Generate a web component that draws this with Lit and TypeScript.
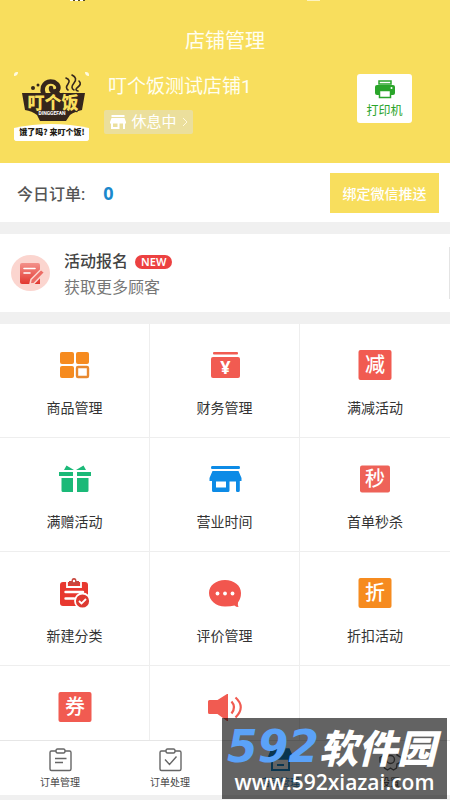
import { LitElement, html, svg, css, TemplateResult } from "lit";
import { customElement } from "lit/decorators.js";

const red = "#f15b51";

const tile = (ch: string, color: string, w: number, h: number) => svg`
  <rect x=${20 - w / 2} y=${20 - h / 2} width=${w} height=${h} rx="2" fill=${color}/>
  <text x="20" y="27" text-anchor="middle" class="glyph">${ch}</text>`;

const icons: Record<string, TemplateResult<2>> = {
  goods: svg`<g fill="#f68b1f"><rect x="5" y="7" width="14" height="12" rx="2"/>
    <rect x="21" y="7" width="13" height="12" rx="2"/><rect x="5" y="21" width="14" height="12" rx="2"/></g>
    <rect x="22" y="22" width="11" height="10" rx="1" fill="none" stroke="#e8892f" stroke-width="2.4"/>`,
  money: svg`<rect x="8" y="7" width="25" height="2.6" rx="1" fill=${red}/>
    <rect x="6" y="12" width="29" height="21" rx="2" fill=${red}/>
    <text x="20.500" y="29" text-anchor="middle" class="yen">¥</text>`,
  reduce: tile("减", red, 33, 30),
  gift: svg`<g fill="#1bb978"><path d="M4 13H18V17H4zM22 13H36V17H22zM6.500 19H18V33H8Q6.500 33 6.500 31.500zM22 19H33.500V31.500Q33.500 33 32 33H22z"/>
    <path d="M9 11L11.500 6.500L19 11zM31 11L28.500 6.500L21 11z"/></g>`,
  shop: svg`<path fill="#0d8be6" fill-rule="evenodd" d="M7 7H34Q35 7 35 8.500T34 10H7Q6 10 6 8.500T7 7zM7.500 12H33.500L36.500 19V22H34.800V31.500Q34.800 33 33.300 33H32.200Q31 33 31 31.500V22.500H24.500V31.500Q24.500 33 23 33H8.500Q7 33 7 31.500V22H4.500V19zM11 22.500V28.500H21V22.500z"/>`,
  flash: tile("秒", "#ee6258", 30, 27),
  category: svg`<rect x="5" y="9" width="28" height="24" rx="3" fill="#e8382f"/>
    <path d="M12 8V14H26V8" fill="none" stroke="#fff" stroke-width="1.800"/>
    <path d="M14 12V8H16.500Q16.500 5 19 5T21.500 8H24V12z" fill="#c8453c"/><circle cx="19" cy="8" r="1.200" fill="#fff"/>
    <path d="M10.500 19H28M10.500 25.500H19" stroke="#fff" stroke-width="2.400" stroke-linecap="round"/>
    <circle cx="27.500" cy="28" r="7.500" fill="#dd3a31" stroke="#fff" stroke-width="1.800"/>
    <path d="M24 28L26.500 30.500L31 26" fill="none" stroke="#fff" stroke-width="1.800"/>`,
  review: svg`<path d="M20 7C11 7 4 12.500 4 20S11 33.500 20 33.500Q26 33.500 29.500 32.500Q31 34 33.500 34Q32.500 32 33 29.500Q36 25.500 36 20C36 12.500 29 7 20 7z" fill="#f2564e"/>
    <g fill="#fff"><circle cx="12.500" cy="20.500" r="1.900"/><circle cx="20" cy="20.500" r="1.900"/><circle cx="27.500" cy="20.500" r="1.900"/></g>`,
  discount: tile("折", "#f68b1f", 33, 30),
  coupon: tile("券", red, 33, 30),
  speaker: svg`<path d="M4.500 13H12.500L22 7H23V34H22L12.500 27H4.500Q3 27 3 25.500V14.500Q3 13 4.500 13z" fill=${red}/>
    <path d="M26.500 14.500Q31.500 20 26.500 26.500M30.500 10.500Q41 20 30.500 30.500" fill="none" stroke=${red} stroke-width="2.200"/>`,
};

const entries: [string, string][] = [
  ["goods", "商品管理"], ["money", "财务管理"], ["reduce", "满减活动"],
  ["gift", "满赠活动"], ["shop", "营业时间"], ["flash", "首单秒杀"],
  ["category", "新建分类"], ["review", "评价管理"], ["discount", "折扣活动"],
  ["coupon", ""], ["speaker", ""],
];

const board = svg`<path d="M8 4H3.500Q2 4 2 5.500V22Q2 23.500 3.500 23.500H21.500Q23 23.500 23 22V5.500Q23 4 21.500 4H17M9.500 2H15.500Q17 2 17 4T15.500 6H9.500Q8 6 8 4T9.500 2z"/>`;

const tabs: [string, TemplateResult<2>][] = [
  ["订单管理", svg`${board}<path d="M7 11.500H18.500M7 15.500H15"/>`],
  ["订单处理", svg`${board}<path d="M7 12.500L11.500 17.500L18.500 9.500"/>`],
  ["店铺管理", svg`<path class="solid" d="M4 2H21L24 9V12H1V9z"/><path stroke-width="2" d="M4 12V23H21V12M9 18H16"/>`],
  ["设置", svg`<path d="M9.500 2L12.500 4L15.500 2L19 4L19 8L23 10.500V15L19 17L18.500 21L15.500 23L12.500 21L9.500 23L6.500 21L6 17L2 15V10.500L6 8V4z"/><circle cx="12.500" cy="12.500" r="4"/>`],
];

@customElement("app-root")
export class AppRoot extends LitElement {
  static styles = css`
    :host {
      display: flex; flex-direction: column; height: 100vh; position: relative;
      overflow: hidden; background: #f0f0f0; color: #333;
      font-family: Roboto, "Noto Sans CJK SC", sans-serif;
    }
    * { box-sizing: border-box; }
    svg { display: block; flex: none; }
    button { font-family: inherit; border: 0; margin: 0; padding: 0; cursor: pointer; }
    a { color: inherit; text-decoration: none; }
    h1, h2, p { margin: 0; font-weight: 400; }
    header { background: #f8de5d; height: 163px; flex: none; color: #fffef0; }
    .status { display: flex; justify-content: space-between; height: 1px; padding: 0 130px 0 70px; }
    .signal { width: 15px; background: repeating-linear-gradient(90deg, #fff 0 3px, #554a20 3px 5px); }
    .battery { width: 13px; background: #fdf4c0; }
    .title { font-size: 20px; line-height: 28px; padding-top: 26px; text-align: center; }
    .store { display: flex; padding: 17px 38px 0 14px; }
    .info { flex: 1; padding-left: 15px; display: flex; flex-direction: column; align-items: flex-start; }
    .name { font-size: 19px; line-height: 30px; padding-left: 4px; }
    .state {
      display: flex; align-items: center; justify-content: space-between;
      width: 89px; height: 24px; margin-top: 8px; padding: 0 5px 0 6px;
      border-radius: 2px; background: #ebdf9c; color: #fff; font-size: 15px; line-height: 24px;
    }
    .print {
      width: 55px; height: 49px; margin-top: 2px; border-radius: 3px; background: #fff; color: #2aa52a;
      display: flex; flex-direction: column; align-items: center; gap: 3px; padding-top: 6px;
      font-size: 12px; line-height: 18px;
    }
    .orders {
      flex: none; display: flex; align-items: center; height: 59px; padding: 0 11px 0 17px;
      background: #fff; color: #555; font-size: 16px; font-weight: 500;
    }
    .count { flex: 1; padding-left: 18px; font-family: "Noto Sans", sans-serif; font-size: 18px; font-weight: 700; color: #1a88cc; }
    .bind {
      width: 109px; height: 40px; background: #f8de5d; color: #fff; font-size: 14px; font-weight: 500;
    }
    .promo { flex: none; margin: 12px 0; height: 78px; padding-top: 13px; background: #fff; }
    .card { display: flex; align-items: center; height: 52px; padding-left: 11px; border-right: 1px solid #e4e4e4; }
    .words { padding: 3px 0 0 14px; font-size: 16px; line-height: 26px; color: #777; }
    .headline { display: flex; align-items: center; gap: 7px; font-size: 16px; font-weight: 500; color: #444; }
    .new {
      padding: 0 6px; border-radius: 7px; background: #ec4141; color: #fff;
      font-family: "Noto Sans", sans-serif; font-size: 11px; line-height: 14px; font-weight: 600;
    }
    .scroll { flex: 1; min-height: 0; overflow: hidden; background: #fff; }
    .grid { display: grid; grid-template-columns: repeat(3, 1fr); }
    .cell {
      display: flex; flex-direction: column; align-items: center; gap: 13px; height: 114px;
      padding-top: 21px; background: #fff; border-right: 1px solid #eee; border-bottom: 1px solid #eee;
      font-size: 14px; line-height: 20px; color: #333;
    }
    .cell:nth-child(3n) { border-right: 0; }
    .glyph { font: 500 20px "Noto Sans CJK SC", sans-serif; fill: #fff; }
    .yen { font: 700 18px "Noto Sans", sans-serif; fill: #fff; }
    .tabs {
      flex: none; display: flex; height: 55px; margin-bottom: 5px; padding: 6px 5px 0;
      border-top: 1px solid #e6e6e6; background: #fff;
    }
    .tab {
      flex: 1; display: flex; flex-direction: column; align-items: center; gap: 3px;
      font-size: 10px; line-height: 16px; color: #444;
    }
    .tab svg { fill: none; stroke: #666; stroke-width: 1.4; }
    .tab.on { color: #1a88cc; }
    .tab.on svg { stroke: #1a88cc; }
    .tab.on .solid { fill: #1a88cc; }
    .mark {
      position: absolute; right: 3px; bottom: 1px; width: 225px; height: 81px;
      background: rgba(0, 0, 0, 0.61); color: #fff; display: flex; flex-direction: column;
      align-items: center; white-space: nowrap;
    }
    .brand { display: flex; align-items: center; height: 50px; padding: 6px 6px 0 0; font-style: italic; font-weight: 900; }
    .digits { font-family: "DejaVu Sans", sans-serif; font-size: 44px; color: #5ba2f8; }
    .han { font-family: "Noto Sans CJK SC", sans-serif; font-size: 39px; line-height: 50px; }
    .url { font-family: "Open Sans", sans-serif; font-weight: 600; font-size: 21px; line-height: 28px; }
    .lt { font: 900 17px "Noto Sans CJK SC", sans-serif; fill: #f9df5c; stroke: #35261c; stroke-width: 2px; paint-order: stroke; }
    .lp { font: 700 5px Roboto, sans-serif; fill: #fff; stroke: #35261c; stroke-width: 1px; paint-order: stroke; }
    .ls { font: 900 8px "Noto Sans CJK SC", sans-serif; fill: #221a12; }
  `;

  logo() {
    return html`<svg width="75" height="69" viewBox="0 0 75 69" role="img" aria-label="叮个饭">
      <rect width="75" height="69" rx="3" fill="#fffbe0"/>
      <path d="M4 0H71Q71 4 75 4V58H0V4Q4 4 4 0z" fill="#f8de5d"/>
      <path d="M8 21H71L68 38Q60 40 56 43L52 49H26L23 43Q18 39 11 38z" fill="#35261c"/>
      <path d="M35 28Q27 22 29 15Q32 8 40 10Q47 14 43 19Q37 21 37 16M43 20Q45 25 50 26" fill="none" stroke="#35261c" stroke-width="4.500" stroke-linecap="round"/>
      <path d="M52 6Q57 8 54 12T54 18M58 3Q64 6 60 11T60 18M65 9Q68 12 64 15T64 19" fill="none" stroke="#35261c" stroke-width="1.600" stroke-linecap="round"/>
      <circle cx="19" cy="16" r="2" fill="#35261c"/><circle cx="24" cy="13" r="1.500" fill="#35261c"/>
      <text class="lt" x="39" y="37" text-anchor="middle">叮个饭</text>
      <text class="lp" x="38" y="43" text-anchor="middle">DINGGEFAN</text>
      <path d="M0 56Q37 48 75 56V66Q75 69 72 69H3Q0 69 0 66z" fill="#fff"/>
      <text class="ls" x="38" y="63" text-anchor="middle">饿了吗? 来叮个饭!</text>
    </svg>`;
  }

  render() {
    return html`
      <header>
        <div class="status"><span class="signal"></span><span class="battery"></span></div>
        <h1 class="title">店铺管理</h1>
        <div class="store">
          ${this.logo()}
          <div class="info">
            <h2 class="name">叮个饭测试店铺1</h2>
            <button class="state">
              <svg width="16" height="14" viewBox="0 0 16 14" fill="#fff"><path d="M1.500 0H14.500V2H1.500zM1.500 3H14.500L16 7V8.500H15V14H13V8.500H9.500V14H1V8.500H0V7zM3 8.500V12H7.500V8.500z" fill-rule="evenodd"/></svg>
              <span>休息中</span>
              <svg width="6" height="10" viewBox="0 0 6 10" fill="none" stroke="#fff8dc"><path d="M1 1L5 5L1 9"/></svg>
            </button>
          </div>
          <button class="print">
            <svg width="20" height="19" viewBox="0 0 20 19"><path d="M4 1H16V4H4z" fill="#fff" stroke="#2aa52a" stroke-width="1.500"/><path d="M2 5H18Q20 5 20 7V13Q20 15 18 15H2Q0 15 0 13V7Q0 5 2 5z" fill="#2aa52a"/><path d="M4.500 10.500H15.500V17.500H4.500z" fill="#fff" stroke="#2aa52a" stroke-width="1.500"/><circle cx="16.500" cy="8" r="1" fill="#fff"/></svg>
            <span>打印机</span>
          </button>
        </div>
      </header>
      <section class="orders">
        <span>今日订单:</span><span class="count">0</span>
        <button class="bind">绑定微信推送</button>
      </section>
      <section class="promo">
        <a class="card" href="#promo">
          <svg width="39" height="36" viewBox="0 0 39 36">
            <defs><linearGradient id="g" x2="0" y2="1"><stop offset="0" stop-color="#f3918a"/><stop offset="1" stop-color="#e2372f"/></linearGradient></defs>
            <ellipse cx="19.500" cy="18" rx="19.500" ry="18" fill="#fbd5cf"/>
            <path d="M11 8H27Q29 8 29 10V29H11Q9 29 9 27V10Q9 8 11 8z" fill="url(#g)"/>
            <path d="M13 13.500H24M13 18H19" stroke="#fff" stroke-width="1.600" stroke-linecap="round"/>
            <path d="M19 29L20 24.500L30 14.500L33.500 17.500L23 28.500z" fill="#ec6c65" stroke="#fbd5cf" stroke-width="1.500"/>
          </svg>
          <div class="words">
            <p class="headline">活动报名<span class="new">NEW</span></p>
            <p>获取更多顾客</p>
          </div>
        </a>
      </section>
      <main class="scroll">
        <div class="grid">
          ${entries.map(([icon, label]) => html`<a class="cell" href="#${icon}">
            <svg width="40" height="40" viewBox="0 0 40 40">${icons[icon]}</svg><span>${label}</span></a>`)}
          <div class="cell"></div>
        </div>
      </main>
      <nav class="tabs">
        ${tabs.map(([label, icon], i) => html`<a class="tab ${i === 2 ? "on" : ""}" href="#tab${i}">
          <svg width="25" height="25" viewBox="0 0 25 25">${icon}</svg><span>${label}</span></a>`)}
      </nav>
      <div class="mark">
        <div class="brand"><span class="digits">592</span><span class="han">软件园</span></div>
        <div class="url">www.592xiazai.com</div>
      </div>`;
  }
}
